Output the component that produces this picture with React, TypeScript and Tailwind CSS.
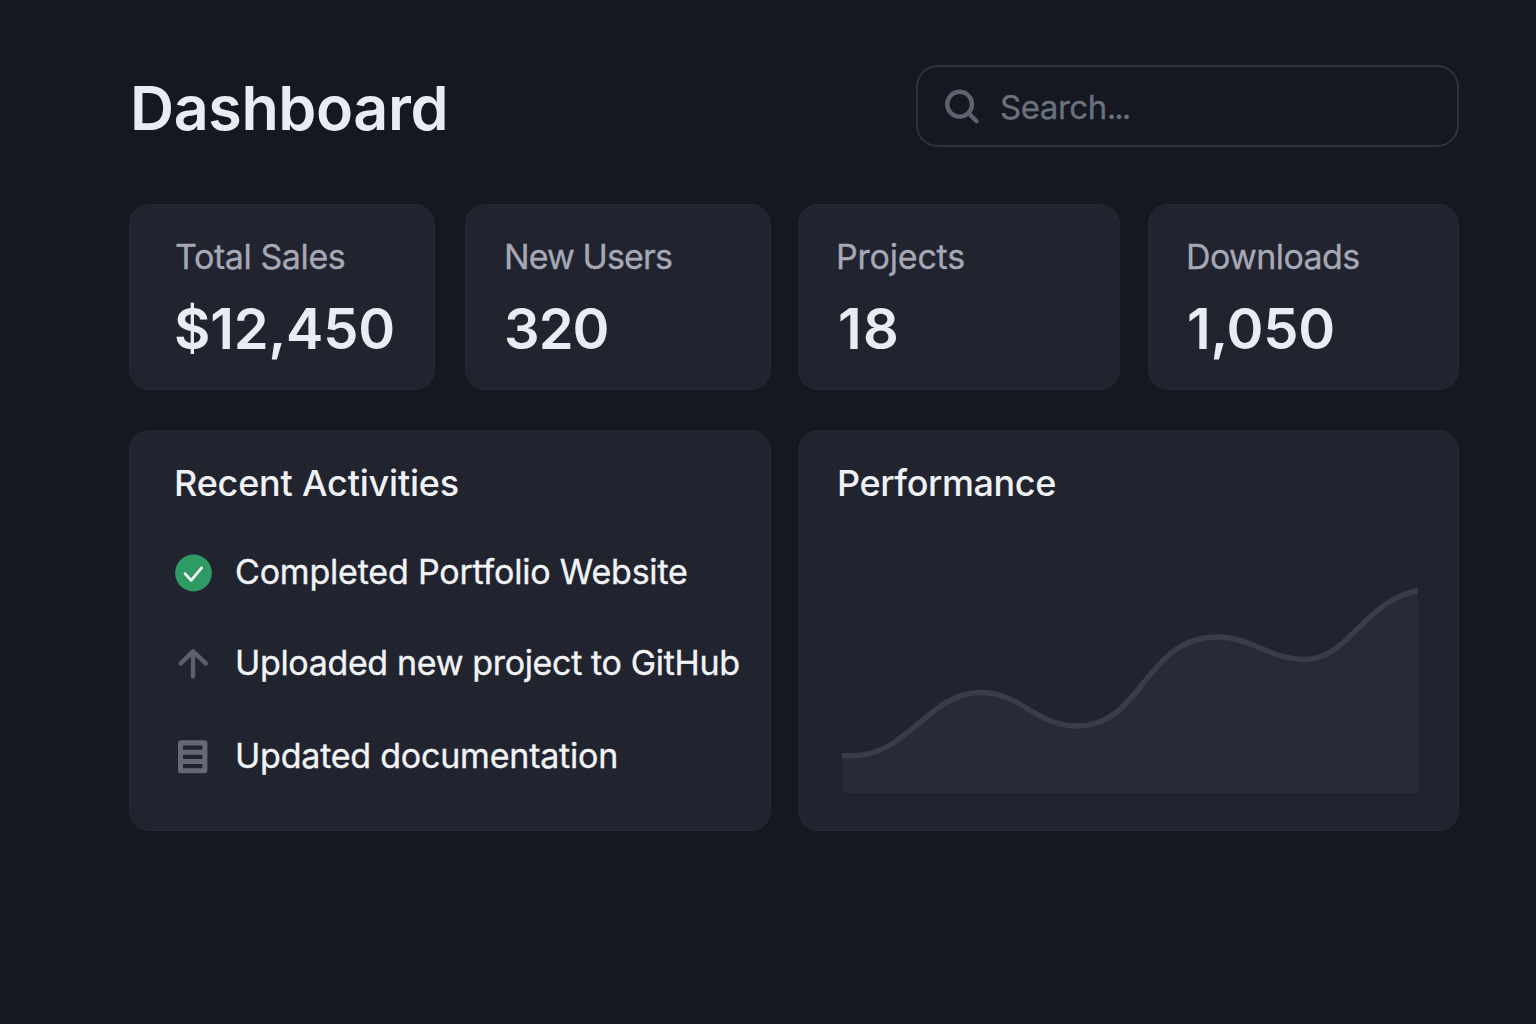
import React from "react";

type Stat = { label: string; value: string; box: string; labelClass: string; valueClass: string };

const leftStats: Stat[] = [
  { label: "Total Sales", value: "$12,450", box: "w-[306px] pl-[45px]", labelClass: "tracking-[-0.4px]", valueClass: "-ml-px tracking-[-0.2px]" },
  { label: "New Users", value: "320", box: "w-[306px] pl-[38px]", labelClass: "tracking-[-0.9px]", valueClass: "tracking-[-1px]" },
];

const rightStats: Stat[] = [
  { label: "Projects", value: "18", box: "w-[322px] pl-[37px]", labelClass: "tracking-[-0.2px]", valueClass: "ml-[2px] tracking-[1.2px]" },
  { label: "Downloads", value: "1,050", box: "w-[311px] pl-[37px]", labelClass: "tracking-[-0.6px]", valueClass: "ml-px tracking-[-0.2px]" },
];

const panel = "rounded-[20px] border border-[#252833] bg-[#21242f]";

function StatCard({ stat }: { stat: Stat }) {
  return (
    <div className={`h-[186px] pt-[32px] ${panel} ${stat.box}`}>
      <div className={`text-[34px] leading-[40px] text-[#a6a9b5] [-webkit-text-stroke:0.3px_#a6a9b5] ${stat.labelClass}`}>
        {stat.label}
      </div>
      <div className={`mt-[20px] text-[56px] leading-[64px] font-semibold text-[#e9ecf3] ${stat.valueClass}`}>
        {stat.value}
      </div>
    </div>
  );
}

function CheckIcon() {
  return (
    <svg width="40" height="40" viewBox="0 0 40 40" fill="none">
      <circle cx="19.5" cy="20" r="18.4" fill="#2f9a64" />
      <path d="M11 20.6 L17.2 27.4 L27.6 14.8" stroke="#fff" strokeWidth="2.7" strokeLinecap="round" strokeLinejoin="round" />
    </svg>
  );
}

function ArrowIcon() {
  return (
    <svg width="40" height="40" viewBox="0 0 40 40" fill="none" stroke="#5c606c" strokeWidth="4.4" strokeLinecap="round" strokeLinejoin="round">
      <path d="M19 32.6 V7.4 M6.8 19.4 L19 7.4 L31.8 19.4" />
    </svg>
  );
}

function DocIcon() {
  return (
    <svg width="40" height="40" viewBox="0 0 40 40">
      <path
        fillRule="evenodd"
        fill="#646976"
        d="M7 3.2 H30.4 Q33.4 3.2 33.4 6.2 V33.3 Q33.4 36.3 30.4 36.3 H7 Q4 36.3 4 33.3 V6.2 Q4 3.2 7 3.2 Z M9 8.6 V12.8 H28.4 V8.6 Z M9 17.8 V22 H28.4 V17.8 Z M9 27 V31.2 H28.4 V27 Z"
      />
    </svg>
  );
}

const activities = [
  { text: "Completed Portfolio Website", icon: <CheckIcon />, row: "h-[40px]", textClass: "tracking-[-0.2px]" },
  { text: "Uploaded new project to GitHub", icon: <ArrowIcon />, row: "mt-[51px] h-[40px]", textClass: "tracking-[-0.35px]" },
  { text: "Updated documentation", icon: <DocIcon />, row: "mt-[53px] h-[40px]", textClass: "tracking-[-0.22px]" },
];

const curve =
  "M840 755.8 H852 C908 756 928 692.5 981 692.5 C1021 692.5 1036 726 1077 726 C1143 726 1145 637 1217 637 C1252 637 1270 659.5 1304 659.5 C1350 659.5 1362 601 1420 590";

export default function App() {
  return (
    <main className="h-[1024px] w-[1536px] overflow-hidden bg-[#151820] pt-[65px] pl-[129px] font-['Inter',sans-serif]">
      <header className="flex h-[82px] w-[1330px] items-center justify-between">
        <h1 className="mt-[4px] pl-px text-[61px] leading-[72px] font-semibold tracking-[-0.4px] text-[#e9ecf3]">Dashboard</h1>
        <div className="flex h-[82px] w-[543px] items-center rounded-[22px] border-2 border-[#2f323e] pl-[26px]">
          <svg className="mt-[2px]" width="36" height="36" viewBox="0 0 36 36" fill="none" stroke="#5d6270" strokeWidth="4.4" strokeLinecap="round">
            <circle cx="15.6" cy="15.2" r="12.4" />
            <path d="M24.8 24.4 L32.6 32.2" />
          </svg>
          <span className="mt-[2px] ml-[20px] text-[33px] leading-[40px] tracking-[-0.45px] text-[#6c717e] [-webkit-text-stroke:0.3px_#6c717e]">
            Search<span className="tracking-[-2px]">...</span>
          </span>
        </div>
      </header>

      <section className="mt-[57px] flex gap-[27px]">
        <div className="flex gap-[30px]">
          {leftStats.map((s) => (
            <StatCard key={s.label} stat={s} />
          ))}
        </div>
        <div className="flex gap-[28px]">
          {rightStats.map((s) => (
            <StatCard key={s.label} stat={s} />
          ))}
        </div>
      </section>

      <section className="mt-[40px] flex gap-[27px]">
        <div className={`h-[401px] w-[642px] pt-[32px] pl-[44px] ${panel}`}>
          <h2 className="text-[36px] leading-[40px] font-medium tracking-[-0.2px] text-[#eff1f6]">Recent Activities</h2>
          <ul className="mt-[50px]">
            {activities.map((a) => (
              <li key={a.text} className={`flex items-center ${a.row}`}>
                {a.icon}
                <span
                  className={`-mt-[2px] ml-[21px] text-[34px] leading-[40px] whitespace-nowrap text-[#f1f3f7] [-webkit-text-stroke:0.35px_#f1f3f7] ${a.textClass}`}
                >
                  {a.text}
                </span>
              </li>
            ))}
          </ul>
        </div>
        <div className={`h-[401px] w-[661px] pt-[32px] pl-[43px] ${panel}`}>
          <h2 className="-ml-[5px] text-[36px] leading-[40px] font-medium tracking-[-0.4px] text-[#eff1f6]">Performance</h2>
          <svg className="mt-[77px]" width="576" height="213" viewBox="842 580 576 213" fill="none">
            <path d={`${curve} V793 H840 Z`} fill="#282b36" />
            <path d={curve} stroke="#393d49" strokeWidth="5.4" />
          </svg>
        </div>
      </section>
    </main>
  );
}
